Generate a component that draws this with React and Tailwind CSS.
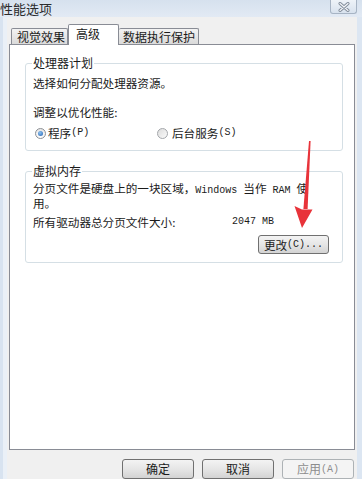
export default function App() {
  return (
    <div className="relative w-[362px] h-[479px] overflow-hidden flex flex-col bg-[#f0f0f0] font-['Noto_Sans_CJK_SC',sans-serif] text-[#1b1b1b]">
      {/* title bar */}
      <div className="h-[17px] flex items-start justify-between bg-gradient-to-b from-[#d6e1ee] to-[#e2eaf4]">
        <span className="text-[13px] leading-[17px] text-[#2b2b2b]">性能选项</span>
        <div className="mr-[5px] w-[27px] h-[14px] flex items-center justify-center rounded-b-[3px] border border-t-0 border-[#a7b4c4] bg-gradient-to-b from-[#eef3f8] to-[#d8e2ee]">
          <svg width="14" height="10" viewBox="0 0 14 10">
            <path d="M3 1.5 L11 8.5 M11 1.5 L3 8.5" stroke="#7f8a98" strokeWidth="3" strokeLinecap="round" />
            <path d="M3 1.5 L11 8.5 M11 1.5 L3 8.5" stroke="#f4f6f9" strokeWidth="1.2" strokeLinecap="round" />
          </svg>
        </div>
      </div>

      <div className="flex-1 flex">
        <div className="w-[7px] flex">
          <div className="w-[3px] bg-[#d8e3f0]" />
          <div className="w-[4px] bg-[#eaf0f7]" />
        </div>

        <div className="flex-1 flex flex-col">
          {/* tabs */}
          <div className="h-[27px] flex items-end pl-[4px] text-[12px]">
            <div className="w-[57px] h-[16px] border border-b-0 border-[#898c95] rounded-t-[2px] bg-gradient-to-b from-[#f3f3f3] to-[#dadada] pl-[5px] leading-[15px]">
              视觉效果
            </div>
            <div className="relative z-10 -mb-px w-[51px] h-[21px] border border-b-0 border-[#898c95] rounded-t-[2px] bg-white pl-[7px] leading-[17px]">
              高级
            </div>
            <div className="w-[80px] h-[16px] border border-b-0 border-l-0 border-[#898c95] rounded-t-[2px] bg-gradient-to-b from-[#f3f3f3] to-[#dadada] pl-[4px] leading-[15px]">
              数据执行保护
            </div>
          </div>

          {/* panel */}
          <div className="ml-[2px] w-[346px] h-[406px] border border-[#898c95] bg-white text-[11.6px]">
            <fieldset className="ml-[15px] mr-[11px] mt-[11px] px-[7px] pt-[6px] pb-[10px] border border-[#d5dfe5] rounded-[3px]">
              <legend className="-ml-[1px] px-[1px] text-[12px] leading-[14px]">处理器计划</legend>
              <p className="leading-[14px]">选择如何分配处理器资源。</p>
              <p className="mt-[15px] leading-[14px]">调整以优化性能:</p>
              <div className="mt-[7px] flex items-center h-[14px]">
                <div className="w-[124px] flex items-center">
                  <div className="ml-[2px] w-[11px] h-[11px] rounded-full border border-[#8c8f94] bg-gradient-to-b from-[#e6e6e6] to-[#ffffff] flex items-center justify-center">
                    <div className="w-[5px] h-[5px] rounded-full bg-[radial-gradient(circle_at_40%_35%,#8fc4f2,#1f5fb0)]" />
                  </div>
                  <span className="ml-[2px] leading-[14px]">程序</span>
                  <span className="font-['Liberation_Mono',monospace] text-[10px] leading-[14px]">(P)</span>
                </div>
                <div className="w-[11px] h-[11px] rounded-full border border-[#a3a6aa] bg-gradient-to-br from-[#dcdcdc] to-[#fbfbfb]" />
                <span className="ml-[4px] leading-[14px]">后台服务</span>
                <span className="font-['Liberation_Mono',monospace] text-[10px] leading-[14px]">(S)</span>
              </div>
            </fieldset>

            <fieldset className="ml-[15px] mr-[11px] mt-[13px] px-[7px] pt-[4px] pb-[8px] border border-[#d5dfe5] rounded-[3px]">
              <legend className="-ml-[1px] px-[1px] text-[12px] leading-[14px]">虚拟内存</legend>
              <p className="leading-[12px]">
                分页文件是硬盘上的一块区域，
                <span className="font-['Liberation_Mono',monospace] text-[10px]">Windows </span>
                当作
                <span className="font-['Liberation_Mono',monospace] text-[10px]"> RAM </span>
                使
                <br />
                用。
              </p>
              <div className="mt-[6px] flex items-center h-[14px]">
                <span className="w-[199px] leading-[14px]">所有驱动器总分页文件大小:</span>
                <span className="font-['Liberation_Mono',monospace] text-[10px] leading-[14px]">2047 MB</span>
              </div>
              <div className="mt-[6px] flex justify-end pr-[6px]">
                <div className="w-[71px] h-[19px] flex items-center justify-center rounded-[3px] border border-[#707070] bg-gradient-to-b from-[#f3f3f3] via-[#e6e6e6] to-[#d3d3d3] leading-[14px]">
                  更改<span className="font-['Liberation_Mono',monospace] text-[10px]">(C)...</span>
                </div>
              </div>
            </fieldset>
          </div>

          {/* dialog buttons */}
          <div className="mt-[9px] flex justify-end gap-[8px] pr-[3px] text-[12px]">
            <div className="w-[72px] h-[20px] flex items-center justify-center rounded-[3px] border border-[#707070] bg-gradient-to-b from-[#f3f3f3] via-[#e6e6e6] to-[#d3d3d3]">
              确定
            </div>
            <div className="w-[72px] h-[20px] flex items-center justify-center rounded-[3px] border border-[#707070] bg-gradient-to-b from-[#f3f3f3] via-[#e6e6e6] to-[#d3d3d3]">
              取消
            </div>
            <div className="w-[72px] h-[20px] flex items-center justify-center rounded-[3px] border border-[#adb2b5] bg-[#f4f4f4] text-[#8d8d8d]">
              应用<span className="font-['Liberation_Mono',monospace] text-[10px]">(A)</span>
            </div>
          </div>
        </div>

        <div className="w-[5px] bg-[#dce6f2]" />
      </div>

      {/* red annotation arrow */}
      <svg className="absolute left-0 top-0 pointer-events-none" width="362" height="479" viewBox="0 0 362 479">
        <polygon points="309,141 310.6,141 307.6,209 303.4,209" fill="#e8333a" />
        <polygon points="294.5,206 302,209.5 312.5,209.5 302,228" fill="#e8333a" />
      </svg>
    </div>
  );
}
